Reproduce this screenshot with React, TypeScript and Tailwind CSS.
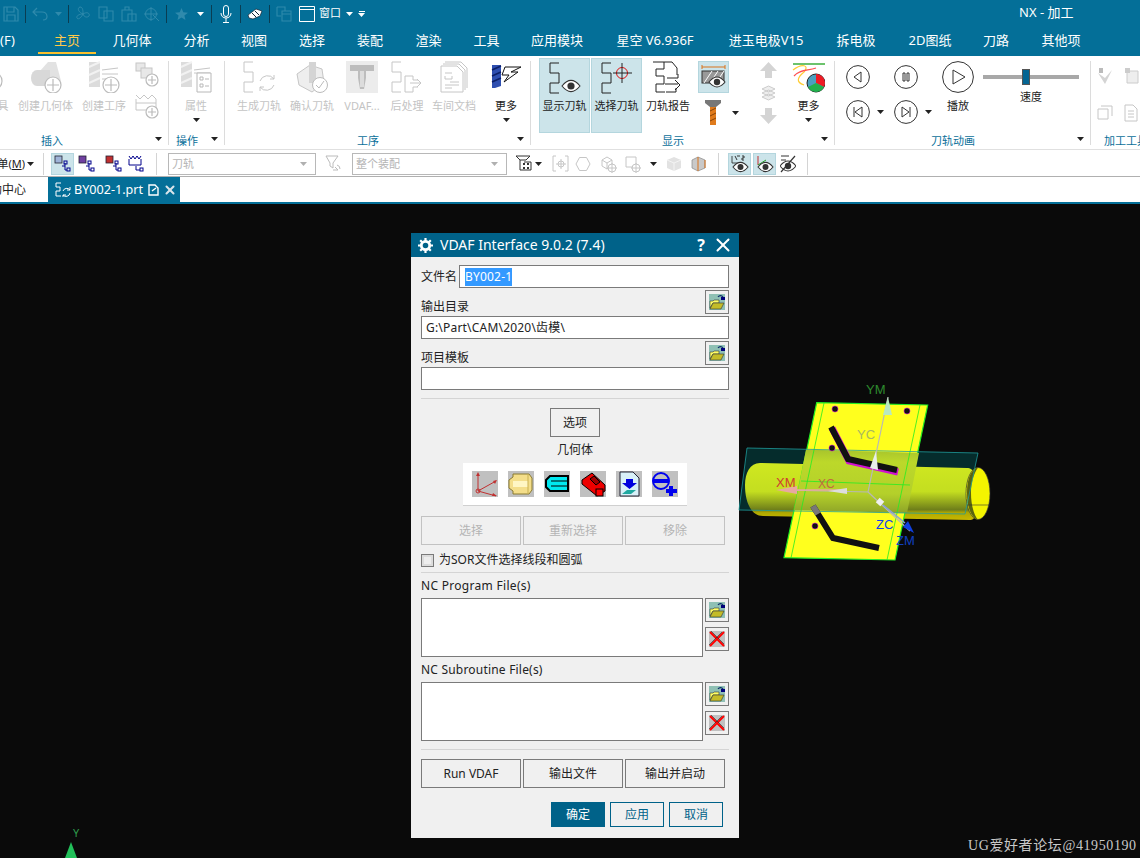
import type { ReactNode } from "react";
import { X } from "lucide-react";

const GRAY = "#c6c6c6";
const wave = "M10 1H1V11H10V21H1V31H10";

function Caret({ color = "#222" }: { color?: string }) {
  return (
    <svg width="7" height="4" viewBox="0 0 7 4" className="shrink-0">
      <path d="M0 0H7L3.5 4Z" fill={color} />
    </svg>
  );
}

function Svg({ w, h, children, className }: { w: number; h: number; children: ReactNode; className?: string }) {
  return (
    <svg width={w} height={h} viewBox={`0 0 ${w} ${h}`} fill="none" className={"shrink-0 " + (className ?? "")}>
      {children}
    </svg>
  );
}

function PlusCircle({ cx, cy, r, color = "#bbb" }: { cx: number; cy: number; r: number; color?: string }) {
  return (
    <g>
      <circle cx={cx} cy={cy} r={r} fill="#fff" stroke={color} strokeWidth="1.2" />
      <path d={`M${cx - r + 2} ${cy}H${cx + r - 2}M${cx} ${cy - r + 2}V${cy + r - 2}`} stroke={color} strokeWidth="1.2" />
    </g>
  );
}

function Eye({ x, y, w = 16, color = "#333" }: { x: number; y: number; w?: number; color?: string }) {
  const h = w * 0.62;
  return (
    <g>
      <path
        d={`M${x} ${y}Q${x + w / 2} ${y - h} ${x + w} ${y}Q${x + w / 2} ${y + h} ${x} ${y}Z`}
        fill="#fff"
        stroke={color}
        strokeWidth="1.1"
      />
      <circle cx={x + w / 2} cy={y} r={w * 0.2} fill={color} />
    </g>
  );
}

function Group({
  w,
  label,
  ml,
  children,
  noArrow,
  labelClass,
}: {
  w: number;
  label: string;
  ml?: string;
  children: ReactNode;
  noArrow?: boolean;
  labelClass?: string;
}) {
  return (
    <div className={"flex flex-col shrink-0 h-[93px] " + (ml ?? "")} style={{ width: w }}>
      <div className="flex flex-1 min-h-0">
        <div className="flex-1 min-w-0 flex">{children}</div>
      </div>
      <div className="flex h-[20px] items-center">
        <span className={"flex-1 pt-[3px] text-center text-[11px] leading-[14px] text-[#0b6f9a] whitespace-nowrap " + (labelClass ?? "")}>
          {label}
        </span>
        {!noArrow && (
          <span className="w-[19px] flex justify-center">
            <Caret />
          </span>
        )}
      </div>
    </div>
  );
}

function Divider() {
  return <div className="w-px h-[84px] mt-[5px] bg-[#dcdcdc] shrink-0" />;
}

function Item({
  w,
  ml,
  icon,
  label,
  off,
  caret,
  active,
}: {
  w: number;
  ml?: number;
  icon: ReactNode;
  label: string;
  off?: boolean;
  caret?: boolean;
  active?: boolean;
}) {
  return (
    <div
      className={
        "flex flex-col items-center shrink-0 h-[75px] whitespace-nowrap " +
        (active ? "bg-[#cce4ea] border border-[#b4d6de] mt-[2px] pt-[2px]" : "pt-[5px]")
      }
      style={{ width: w, marginLeft: ml ?? 0 }}
    >
      <div className="h-[32px] flex justify-center">{icon}</div>
      <span className={"mt-[6px] text-[11px] leading-[14px] " + (off ? "text-[#c4c4c4]" : "text-[#222]")}>{label}</span>
      {caret && (
        <span className="mt-[5px]">
          <Caret />
        </span>
      )}
    </div>
  );
}

function Circle({ d, size = 24, children }: { d?: string; size?: number; children?: ReactNode }) {
  const c = size / 2;
  return (
    <Svg w={size} h={size}>
      <circle cx={c} cy={c} r={c - 0.6} stroke="#333" strokeWidth="1" fill="#fff" />
      {d && <path d={d} stroke="#333" strokeWidth="1" />}
      {children}
    </Svg>
  );
}

function TopRow() {
  const sep = <div className="w-px h-[18px] bg-[#0a3d52] shrink-0" />;
  const dim = "#2f8aac";
  return (
    <div className="h-[27px] flex items-center relative">
      <Svg w={16} h={16} className="ml-[3px]">
        <path d="M1 1H12L15 4V15H1Z M4 1V6H11V1 M4 15V9H12V15" stroke={dim} strokeWidth="1.2" />
      </Svg>
      <div className="ml-[6px]">{sep}</div>
      <Svg w={16} h={14} className="ml-[6px]">
        <path d="M5 1L1 5L5 9M1 5H10C13 5 15 7 15 9.5C15 12 13 13 11 13" stroke={dim} strokeWidth="1.2" />
      </Svg>
      <span className="ml-[7px]">
        <Caret color={dim} />
      </span>
      <div className="ml-[6px]">{sep}</div>
      <Svg w={16} h={16} className="ml-[6px]">
        <path d="M8 8C3 6 2 2 5 1C8 1 8 5 8 8ZM8 8C13 5 15 8 14 10C12 12 9 11 8 8ZM8 8C6 12 3 14 2 12C1 10 4 8 8 8Z" stroke={dim} />
      </Svg>
      <Svg w={16} h={16} className="ml-[7px]">
        <path d="M1 1H9V12H1ZM6 5H15V15H6Z" stroke={dim} strokeWidth="1.1" />
      </Svg>
      <Svg w={16} h={16} className="ml-[7px]">
        <path d="M1 4H11V15H1ZM4 4V1H8V4M7 8H15V15H7Z" stroke={dim} strokeWidth="1.1" />
      </Svg>
      <Svg w={16} h={16} className="ml-[7px]">
        <circle cx="7" cy="8" r="5.5" stroke={dim} />
        <path d="M0 8H14M7 1V15M9 9L15 15" stroke={dim} />
      </Svg>
      <div className="ml-[6px]">{sep}</div>
      <Svg w={13} h={12} className="ml-[8px]">
        <path d="M6.5 0L8.3 4.3L13 4.7L9.4 7.6L10.5 12L6.5 9.6L2.5 12L3.6 7.6L0 4.7L4.7 4.3Z" fill="#2f8aac" />
      </Svg>
      <span className="ml-[9px]">
        <Caret color="#fff" />
      </span>
      <div className="ml-[7px]">{sep}</div>
      <Svg w={12} h={18} className="ml-[8px]">
        <rect x="3.5" y="0.5" width="5" height="11" rx="2.5" stroke="#fff" />
        <path d="M1 8C1 11 3 13 6 13C9 13 11 11 11 8M6 13V17M3 17.5H9" stroke="#fff" />
      </Svg>
      <div className="ml-[8px]">{sep}</div>
      <Svg w={16} h={12} className="ml-[6px]">
        <path d="M1 7L9 1L15 3L13 8L6 11L2 10Z" fill="#fff" stroke="#123" strokeWidth="0.7" />
        <path d="M5 5L9 9M8 3L12 7" stroke="#123" strokeWidth="1" />
      </Svg>
      <div className="ml-[6px]">{sep}</div>
      <Svg w={16} h={16} className="ml-[6px]">
        <path d="M1 1H9V5M1 1V10H5M6 5H15V15H6ZM6 8H15" stroke={dim} strokeWidth="1.1" />
      </Svg>
      <Svg w={16} h={16} className="ml-[7px]">
        <path d="M0.5 0.5H15.5V15.5H0.5ZM0.5 3.5H15.5" stroke="#fff" />
      </Svg>
      <span className="ml-[4px] text-[11px] text-white">窗口</span>
      <span className="ml-[5px]">
        <Caret color="#fff" />
      </span>
      <span className="ml-[5px] flex flex-col gap-[1px] items-center">
        <span className="w-[6px] h-px bg-white" />
        <Caret color="#fff" />
      </span>
      <span className="absolute left-[1019px] top-[4px] text-[13px] leading-[16px] text-white whitespace-nowrap">NX - 加工</span>
    </div>
  );
}

const menus: [string, number][] = [
  ["几何体", 72],
  ["分析", 57],
  ["视图", 58],
  ["选择", 58],
  ["装配", 58],
  ["渲染", 59],
  ["工具", 57],
  ["应用模块", 84],
  ["星空 V6.936F", 112],
  ["进玉电极V15", 110],
  ["拆电极", 70],
  ["2D图纸", 78],
  ["刀路", 54],
  ["其他项", 76],
];

function MenuRow() {
  return (
    <div className="h-[29px] flex text-[13px] text-white whitespace-nowrap">
      <span className="w-[38px] leading-[27px]">(F)</span>
      <span className="w-[58px] text-center leading-[27px] text-[#ffc94a] border-b-2 border-[#fbc02d] h-[27px]">主页</span>
      {menus.map(([m, w]) => (
        <span key={m} className="text-center leading-[27px]" style={{ width: w }}>
          {m}
        </span>
      ))}
    </div>
  );
}

function SmallStack() {
  return (
    <div className="flex flex-col ml-[9px] w-[24px] pt-[6px] gap-[6px] shrink-0">
      <Svg w={24} h={26}>
        <rect x="1" y="1" width="9" height="8" fill="#e8e8e8" stroke={GRAY} />
        <rect x="6" y="6" width="11" height="10" fill="#e8e8e8" stroke={GRAY} />
        <PlusCircle cx={17} cy={18} r={6} />
      </Svg>
      <Svg w={24} h={26}>
        <path d="M1 1L5 5L9 1L13 5L17 1L21 5M1 5V16H21V5M1 9H21" stroke={GRAY} />
        <PlusCircle cx={17} cy={18} r={6} />
      </Svg>
    </div>
  );
}

function Ribbon() {
  return (
    <div className="h-[93px] flex overflow-hidden border-b-0 bg-white">
      <Group w={213} label="插入" ml="ml-[-45px]">
        <Item w={63} label="创建刀具" off icon={<Svg w={32} h={32}><PlusCircle cx={22} cy={20} r={9} /></Svg>} />
        <Item
          w={55}
          label="创建几何体"
          off
          icon={
            <Svg w={32} h={32}>
              <path d="M10 10L18 1L26 1L31 20L18 26Z" fill="#e2e2e2" />
              <ellipse cx="7" cy="17" rx="6" ry="8" fill="#d8d8d8" />
              <path d="M7 9H20V25H7" fill="#d8d8d8" />
              <PlusCircle cx={23} cy={24} r={8} />
            </Svg>
          }
        />
        <Item
          w={44}
          ml={9}
          label="创建工序"
          off
          icon={
            <Svg w={32} h={32}>
              <path d="M1 1H12V26H1Z" fill="#dcdcdc" />
              <path d="M1 6L12 1M1 14L12 9M1 22L12 17" stroke="#f2f2f2" strokeWidth="2" />
              <path d="M14 13H30M14 9L30 7M14 18H26" stroke={GRAY} />
              <PlusCircle cx={23} cy={24} r={8} />
            </Svg>
          }
        />
        <SmallStack />
      </Group>
      <Divider />
      <Group w={55} label="操作">
        <Item
          w={54}
          label="属性"
          off
          caret
          icon={
            <Svg w={32} h={32}>
              <path d="M1 1H12V26H1Z" fill="#dcdcdc" />
              <path d="M1 6L12 1M1 14L12 9M1 22L12 17" stroke="#f2f2f2" strokeWidth="2" />
              <path d="M14 9L30 7M14 12H30" stroke={GRAY} />
              <path d="M17 12H31V31H17ZM20 16H23V19H20ZM20 23H23V26H20ZM25 18H29M25 25H29" stroke="#b8b8b8" fill="#fff" />
            </Svg>
          }
        />
      </Group>
      <Divider />
      <Group w={305} label="工序">
        <Item
          w={44}
          ml={12}
          label="生成刀轨"
          off
          icon={
            <Svg w={32} h={32}>
              <path d={wave} stroke={GRAY} />
              <path d="M17 20A8 8 0 0 1 31 18M31 24A8 8 0 0 1 17 26M31 14V18H27M17 30V26H21" stroke={GRAY} />
            </Svg>
          }
        />
        <Item
          w={44}
          ml={9}
          label="确认刀轨"
          off
          icon={
            <Svg w={33} h={32}>
              <path d="M1 13L14 4L26 8L28 22L16 31L3 24Z" fill="#eee" stroke={GRAY} />
              <path d="M13 1H20V22H13Z" fill="#d4d4d4" />
              <circle cx="24" cy="24" r="7.5" fill="#fff" stroke="#bbb" />
              <path d="M20 24L23 27L28 20" stroke="#bbb" />
            </Svg>
          }
        />
        <Item
          w={36}
          ml={10}
          label="VDAF..."
          off
          icon={
            <div className="w-[32px] h-[32px] bg-[#ececec] flex justify-center">
              <Svg w={26} h={30}>
                <path d="M1 4H25V10H17V17L15 28H11L9 17V10H1Z" fill="#bdbdbd" />
                <path d="M11 10H15V26H11Z" fill="#dcdcdc" />
              </Svg>
            </div>
          }
        />
        <Item
          w={34}
          ml={10}
          label="后处理"
          off
          icon={
            <Svg w={32} h={32}>
              <path d={wave} stroke={GRAY} />
              <path d="M14 15H22V19H27M14 15V31H22V26H27M19 22H29M26 18L30 22L26 26" stroke={GRAY} />
            </Svg>
          }
        />
        <Item
          w={44}
          ml={8}
          label="车间文档"
          off
          icon={
            <Svg w={28} h={32}>
              <path d="M5 1H21L27 7V27M3 3H19L25 9V29" stroke={GRAY} />
              <path d="M1 5H17L23 11V31H1Z" fill="#fff" stroke={GRAY} />
              <path d="M5 12H12M5 15V18H12V15M10 21H19M5 24H19M5 27H12" stroke={GRAY} />
            </Svg>
          }
        />
        <Item
          w={30}
          ml={15}
          label="更多"
          caret
          icon={
            <Svg w={30} h={30}>
              <path d="M1 4H10V25L4 27H1Z" fill="#2f4fb0" />
              <path d="M1 9L10 5M1 15L10 11M1 21L10 17" stroke="#0c1f66" strokeWidth="1.5" />
              <path d="M14 6H30L20 11H27L13 21L18 14H11Z" fill="#fff" stroke="#111" />
            </Svg>
          }
        />
      </Group>
      <Divider />
      <Group w={303} label="显示">
        <Item
          w={51}
          ml={8}
          active
          label="显示刀轨"
          icon={
            <Svg w={32} h={32} className="mt-[1px]">
              <path d={wave} stroke="#222" />
              <Eye x={13} y={24} w={18} />
            </Svg>
          }
        />
        <Item
          w={51}
          ml={1}
          active
          label="选择刀轨"
          icon={
            <Svg w={32} h={32} className="mt-[1px]">
              <path d={wave} stroke="#222" />
              <circle cx="21" cy="11" r="5.5" stroke="#e01010" />
              <path d="M12 11H31M21 1V21" stroke="#222" />
            </Svg>
          }
        />
        <Item
          w={46}
          ml={3}
          label="刀轨报告"
          icon={
            <Svg w={33} h={32}>
              <path d="M1 1H12V8H4V15H12V23H4V31H13" stroke="#222" />
              <path d="M12 1H20L25 7V14" stroke="#222" />
              <path d="M15 17H26V13M13 23H26M23 19L28 24L23 29M14 31H24V27" stroke="#222" />
            </Svg>
          }
        />
        <div className="flex flex-col ml-[7px] w-[44px] shrink-0 pt-[5px]">
          <div className="w-[31px] h-[32px] bg-[#cce4ea] border border-[#b4d6de] flex justify-center items-center">
            <Svg w={25} h={26}>
              <path d="M1 3H24" stroke="#d9731a" />
              <path d="M1 1V5M24 1V5" stroke="#d9731a" />
              <rect x="1" y="7" width="22" height="12" fill="#999" stroke="#333" />
              <path d="M3 19L11 7M9 19L17 7M15 19L23 7" stroke="#fff" />
              <Eye x={8} y={18} w={16} />
            </Svg>
          </div>
          <div className="flex items-center mt-[7px]">
            <Svg w={16} h={26} className="ml-[7px]">
              <path d="M0 0H16V3L11 7H5L0 3Z" fill="#777" />
              <path d="M5 7H11V25H5Z" fill="#e07b1c" />
              <path d="M5 11L11 8M5 16L11 13M5 21L11 18" stroke="#8a4508" />
            </Svg>
            <span className="ml-[11px]">
              <Caret />
            </span>
          </div>
        </div>
        <div className="flex flex-col items-center ml-[18px] w-[17px] pt-[6px] gap-[7px] shrink-0">
          <Svg w={17} h={16}>
            <path d="M8.5 0L17 9H12V16H5V9H0Z" fill="#d4d4d4" />
          </Svg>
          <Svg w={17} h={16}>
            <path d="M2 4L8.5 1L15 4L8.5 7ZM2 8L8.5 5L15 8L8.5 11ZM2 12L8.5 9L15 12L8.5 15Z" fill="#eee" stroke="#ccc" />
          </Svg>
          <Svg w={17} h={16}>
            <path d="M5 0H12V7H17L8.5 16L0 7H5Z" fill="#d4d4d4" />
          </Svg>
        </div>
        <Item
          w={33}
          ml={15}
          label="更多"
          caret
          icon={
            <Svg w={33} h={32}>
              <path d="M1 3H33" stroke="#0a9a0a" strokeWidth="1.2" />
              <path d="M1 9C10 2 18 4 12 11C6 16 3 21 12 24" stroke="#ffcc33" strokeWidth="1.2" />
              <path d="M2 15C8 8 16 10 24 7" stroke="#ff5050" strokeWidth="1.2" />
              <circle cx="24" cy="22" r="9" fill="#4ba0c0" stroke="#222" />
              <path d="M24 22V13A9 9 0 0 1 32 26Z" fill="#ee1c25" />
              <path d="M24 22L32 26A9 9 0 0 1 16 26Z" fill="#22b14c" />
            </Svg>
          }
        />
      </Group>
      <Divider />
      <Group w={255} label="刀轨动画">
        <div className="grid grid-cols-[24px_24px] grid-rows-[24px_24px] gap-x-[24px] gap-y-[11px] ml-[11px] mt-[9px] w-[72px] shrink-0">
          <Circle d="M15 7L8 12L15 17Z" />
          <Circle d="M9 8V16H11V8ZM13 8V16H15V8Z" />
          <div className="flex items-center w-[39px]">
            <Circle d="M8 7V17M16 7L9 12L16 17Z" />
            <span className="ml-[7px]">
              <Caret />
            </span>
          </div>
          <div className="flex items-center w-[39px]">
            <Circle d="M16 7V17M8 7L15 12L8 17Z" />
            <span className="ml-[7px]">
              <Caret />
            </span>
          </div>
        </div>
        <div className="ml-[24px] w-[32px] shrink-0 pt-[5px] flex flex-col items-center whitespace-nowrap">
          <Circle size={32} d="M11 9L23 16L11 23Z" />
          <span className="mt-[6px] text-[11px] leading-[14px] text-[#222]">播放</span>
        </div>
        <div className="ml-[9px] w-[96px] shrink-0 pt-[13px] flex flex-col items-center">
          <div className="w-full h-[16px] flex items-center justify-center relative">
            <div className="w-full h-[4px] bg-[#a8a8a8]" />
            <div className="absolute left-[39px] top-0 w-[8px] h-[16px] bg-[#046593] border border-[#555]" />
          </div>
          <span className="mt-[5px] text-[11px] leading-[14px] text-[#222]">速度</span>
        </div>
      </Group>
      <Divider />
      <Group w={60} label="加工工具" noArrow labelClass="text-left pl-[13px]">
        <div className="ml-[6px] pt-[11px] grid grid-cols-2 gap-x-[8px] gap-y-[12px] w-[46px] shrink-0">
          <Svg w={16} h={18}>
            <path d="M1 6L8 17L15 3L8 11Z" fill="#d4d4d4" />
            <path d="M2 1H6V6H2Z" fill="#bbb" />
          </Svg>
          <Svg w={16} h={18}>
            <path d="M3 4H14V16H3Z" fill="#eee" stroke="#ccc" />
            <path d="M1 1H6V6H1Z" fill="#ccc" />
          </Svg>
          <Svg w={16} h={18}>
            <path d="M1 5H11V15H1ZM4 2H15V12" stroke={GRAY} />
          </Svg>
          <Svg w={14} h={18}>
            <path d="M1 1H9L13 5V17H1ZM4 7H10M4 10H10M4 13H10" stroke={GRAY} />
          </Svg>
        </div>
      </Group>
    </div>
  );
}

function Select({ w, text, ml }: { w: number; text: string; ml: number }) {
  return (
    <div
      className="h-[22px] shrink-0 border border-[#b8b8b8] bg-white flex items-center justify-between px-[3px] text-[11px] text-[#b4b4b4]"
      style={{ width: w, marginLeft: ml }}
    >
      <span>{text}</span>
      <span className="mr-[5px]">
        <Caret color="#b0b0b0" />
      </span>
    </div>
  );
}

function Treebox({ color }: { color: string }) {
  return (
    <Svg w={17} h={18}>
      <rect x="1" y="1" width="7" height="7" fill={color} stroke="#223" strokeWidth="0.8" />
      <path d="M8 11H11V15H13M11 11V8" stroke="#00008b" />
      <rect x="10" y="6" width="3" height="3" stroke="#00008b" />
      <rect x="13" y="13" width="3" height="3" stroke="#00008b" />
    </Svg>
  );
}

function ToolSep({ ml }: { ml: number }) {
  return <div className="w-px h-[22px] bg-[#d4d4d4] shrink-0" style={{ marginLeft: ml }} />;
}

function Toolbar() {
  return (
    <div className="h-[28px] pt-[2px] flex items-center border-t border-[#e0e0e0] border-b border-b-[#b0b0b0] text-[11px] text-[#222] whitespace-nowrap">
      <span className="w-[25px] flex justify-end overflow-hidden">
        <span>
          单(<span className="underline">M</span>)
        </span>
      </span>
      <span className="ml-[2px]">
        <Caret />
      </span>
      <ToolSep ml={9} />
      <div className="ml-[7px] w-[23px] h-[22px] bg-[#cce4ea] border border-[#b4d6de] flex items-center justify-center">
        <Treebox color="#9fb4d8" />
      </div>
      <div className="ml-[4px]">
        <Treebox color="#7040a0" />
      </div>
      <div className="ml-[10px]">
        <Treebox color="#c03030" />
      </div>
      <div className="ml-[6px]">
        <Svg w={17} h={18}>
          <path d="M1 1L3 4L5 1L7 4L9 1L11 4L13 1M1 4V10H13V4" stroke="#00008b" />
          <path d="M8 11V15H12" stroke="#00008b" />
          <rect x="12" y="13" width="3" height="3" stroke="#00008b" />
        </Svg>
      </div>
      <ToolSep ml={11} />
      <Select w={148} text="刀轨" ml={11} />
      <Svg w={17} h={18} className="ml-[9px]">
        <path d="M1 1H13L8 8V13L5 11V8ZM10 12L13 15H8M12 10A4 4 0 0 1 15 14" stroke="#bbb" />
      </Svg>
      <Select w={155} text="整个装配" ml={10} />
      <Svg w={16} h={18} className="ml-[9px]">
        <path d="M0 1H14L10 5H4ZM4 5V15H15V7H8" stroke="#333" />
        <path d="M7 8H9V10H7ZM7 12H9V14H7ZM11 8H13V10H11ZM11 12H13V14H11Z" fill="#333" />
      </Svg>
      <span className="ml-[3px]">
        <Caret />
      </span>
      <Svg w={17} h={18} className="ml-[10px]">
        <path d="M4 1H1V16H4M13 1H16V16H13" stroke={GRAY} />
        <circle cx="9" cy="9" r="3" stroke={GRAY} />
        <path d="M4 9H14M9 4V14" stroke={GRAY} />
      </Svg>
      <Svg w={16} h={16} className="ml-[6px]">
        <path d="M4.5 1.5H11.5L15 8L11.5 14.5H4.5L1 8Z" stroke={GRAY} />
      </Svg>
      <Svg w={16} h={17} className="ml-[10px]">
        <path d="M1 4L6 1L11 4V10L6 13L1 10ZM1 4L6 7L11 4M6 7V13" stroke={GRAY} />
        <circle cx="11" cy="12" r="4" fill="#fff" stroke={GRAY} />
        <path d="M6 12H16M11 7V17" stroke={GRAY} />
      </Svg>
      <Svg w={16} h={17} className="ml-[8px]">
        <path d="M1 1H11V11H1" stroke={GRAY} />
        <path d="M1 1V11" stroke={GRAY} />
        <circle cx="11" cy="12" r="4" fill="#fff" stroke={GRAY} />
        <path d="M6 12H16M11 7V17" stroke={GRAY} />
      </Svg>
      <span className="ml-[9px]">
        <Caret />
      </span>
      <Svg w={16} h={16} className="ml-[9px]">
        <path d="M1 4L8 1L15 4V12L8 15L1 12Z" fill="#e2e2e2" />
        <path d="M1 4L8 7L15 4M8 7V15" stroke="#f4f4f4" />
      </Svg>
      <Svg w={15} h={16} className="ml-[9px]">
        <path d="M1 4L7 1L14 4V12L7 15L1 12Z" fill="#c9c9c9" stroke="#888" strokeWidth="0.7" />
        <path d="M7 1V15M14 4V12" stroke="#d9731a" />
      </Svg>
      <ToolSep ml={12} />
      <div className="ml-[9px] w-[23px] h-[22px] bg-[#cce4ea] border border-[#b4d6de] flex justify-center items-center">
        <Svg w={18} h={18}>
          <path d="M1 1V8H8" stroke="#222" strokeWidth="0.8" />
          <path d="M4 1L6 5M6 1H9M11 1H13V3H11V5H13" stroke="#222" strokeWidth="0.9" />
          <Eye x={2} y={12} w={15} />
        </Svg>
      </div>
      <div className="ml-[2px] w-[23px] h-[22px] bg-[#cce4ea] border border-[#b4d6de] flex justify-center items-center">
        <Svg w={18} h={18}>
          <path d="M2 1V10" stroke="#c03030" />
          <path d="M2 10L10 5" stroke="#22a022" />
          <Eye x={2} y={12} w={15} />
        </Svg>
      </div>
      <Svg w={16} h={18} className="ml-[4px]">
        <path d="M1 1H9M1 5H6" stroke="#333" />
        <Eye x={0} y={11} w={16} />
        <path d="M1 17L15 1" stroke="#333" strokeWidth="1.2" />
      </Svg>
      <ToolSep ml={11} />
    </div>
  );
}

function TabsRow() {
  return (
    <div className="h-[25px] flex items-end text-[13px] whitespace-nowrap">
      <span className="w-[48px] h-[24px] flex items-center justify-end pr-[22px] text-[#222] text-[12px] overflow-hidden">助中心</span>
      <div className="w-[132px] h-[25px] bg-[#046f98] text-white flex items-center pl-[7px]">
        <Svg w={16} h={16}>
          <path d="M6 1H1V5H5V9H1V14H6" stroke="#fff" />
          <path d="M8 9A4 4 0 0 1 15 8M15 11A4 4 0 0 1 8 13M15 5V8H12M8 15V13H11" stroke="#fff" />
        </Svg>
        <span className="ml-[3px] text-[12.6px] leading-[16px]">BY002-1.prt</span>
        <Svg w={11} h={12} className="ml-[5px]">
          <path d="M1 1H7L10 4V11H1Z" stroke="#fff" strokeWidth="1.4" />
          <path d="M4 7L8 4" stroke="#fff" strokeWidth="1.4" />
        </Svg>
        <X size={14} strokeWidth={3.5} className="ml-[4px] text-[#d8e4ea]" />
      </div>
    </div>
  );
}

function Folder() {
  return (
    <div className="w-[24px] h-[24px] bg-[#f0f0f0] border border-[#7a7a7a] flex items-center justify-center shrink-0">
      <Svg w={16} h={16}>
        <rect width="16" height="16" fill="#8fc0b4" />
        <path d="M9 3A3 3 0 0 1 14 3" stroke="#0a2a6a" strokeWidth="1.2" />
        <rect x="12" y="3" width="4" height="3" fill="#00007a" />
        <path d="M1 14V7H4L5 6H10V9H4L1 14Z" fill="#ffff66" stroke="#333" strokeWidth="0.6" />
        <path d="M1 15L4 9H15L12 15Z" fill="#c4bc28" stroke="#333" strokeWidth="0.6" />
      </Svg>
    </div>
  );
}

function Remove() {
  return (
    <div className="w-[24px] h-[24px] bg-[#f0f0f0] border border-[#7a7a7a] flex items-center justify-center shrink-0">
      <Svg w={16} h={16}>
        <rect width="16" height="16" fill="#c0c0c0" />
        <path d="M1 1L15 15M15 1L1 15" stroke="#ff0000" strokeWidth="2" />
        <path d="M2 0L15 13M0 14L13 1" stroke="#222" strokeWidth="0.6" />
      </Svg>
    </div>
  );
}

function Btn({ children, off, w = "w-[100px]" }: { children: ReactNode; off?: boolean; w?: string }) {
  return (
    <div
      className={
        "h-[29px] flex items-center justify-center border text-[12px] " +
        w +
        (off ? " border-[#c2c2c2] text-[#b4b4b4]" : " border-[#7a7a7a] text-[#222]")
      }
    >
      {children}
    </div>
  );
}

function DialogIcon({ children }: { children: ReactNode }) {
  return (
    <Svg w={26} h={26} className="bg-[#c0c0c0]">
      {children}
    </Svg>
  );
}

function FileList() {
  return (
    <div className="flex gap-[2px] h-[59px]">
      <div className="flex-1 bg-white border border-[#7a7a7a]" />
      <div className="flex flex-col gap-[5px]">
        <Folder />
        <Remove />
      </div>
    </div>
  );
}

function Dialog() {
  return (
    <div className="absolute left-[411px] top-[29px] w-[328px] h-[605px] bg-[#f0f0f0] text-[12px] text-[#222] whitespace-nowrap">
      <div className="h-[24px] bg-[#006289] flex items-center text-white pl-[7px]">
        <Svg w={15} h={15}>
          <circle cx="7.5" cy="7.5" r="4.2" stroke="#fff" strokeWidth="2.8" />
          <path d="M7.5 0V3M7.5 12V15M0 7.5H3M12 7.5H15M2.2 2.2L4 4M11 11L12.8 12.8M12.8 2.2L11 4M4 11L2.2 12.8" stroke="#fff" strokeWidth="2.2" />
        </Svg>
        <span className="ml-[7px] text-[14px] leading-[18px]">VDAF Interface 9.0.2 (7.4)</span>
        <span className="ml-auto text-[16px] font-bold leading-[18px]">?</span>
        <X size={22} strokeWidth={2.2} className="ml-[7px] mr-[5px]" />
      </div>
      <div className="px-[10px] flex flex-col">
        <div className="flex items-center mt-[8px] h-[23px]">
          <span className="w-[38px] shrink-0">文件名</span>
          <div className="flex-1 h-[23px] bg-white border border-[#7a7a7a] flex items-center pl-[5px]">
            <span className="bg-[#3399ff] text-white h-[18px] leading-[18px] tracking-[0.2px]">BY002-1</span>
          </div>
        </div>
        <div className="flex items-end justify-between mt-[2px] h-[24px]">
          <span className="leading-[16px] mb-[-1px]">输出目录</span>
          <Folder />
        </div>
        <div className="mt-[2px] h-[23px] bg-white border border-[#7a7a7a] flex items-center pl-[4px] tracking-[0.2px]">G:\Part\CAM\2020\齿模\</div>
        <div className="flex items-end justify-between mt-[2px] h-[24px]">
          <span className="leading-[16px] mb-[-1px]">项目模板</span>
          <Folder />
        </div>
        <div className="mt-[2px] h-[23px] bg-white border border-[#7a7a7a]" />
        <div className="mt-[8px] h-px bg-[#d4d4d4]" />
        <div className="mt-[9px] flex justify-center">
          <Btn w="w-[50px]">选项</Btn>
        </div>
        <div className="mt-[5px] text-center leading-[16px]">几何体</div>
        <div className="mt-[5px] mx-[42px] h-[43px] bg-white border-b border-[#d0d0d0] flex items-center justify-center gap-[10px]">
          <DialogIcon>
            <path d="M6 20V3M6 20L24 10M6 20L24 25" stroke="#c03030" />
            <circle cx="6" cy="20" r="2" stroke="#c03030" />
            <path d="M6 1L4 5H8ZM25 9L21 10L23 13ZM25 25L21 22L20 25Z" fill="#c03030" />
          </DialogIcon>
          <DialogIcon>
            <path d="M1 9L5 6V3H21L24 7V19L21 23H5V20L1 17Z" fill="#f4de8a" stroke="#8a7a30" />
            <path d="M5 10H20V16H5Z" fill="#fff6c4" />
            <path d="M20 3V23" stroke="#c8b050" />
          </DialogIcon>
          <DialogIcon>
            <path d="M2 9L6 5H24V20H6L2 16Z" fill="#00e8f0" stroke="#000" strokeWidth="2" />
            <path d="M7 10H23M7 15H23" stroke="#000" />
          </DialogIcon>
          <DialogIcon>
            <path d="M2 9L12 2L25 14V20L17 25L2 13Z" fill="#ee0000" stroke="#000" />
            <path d="M10 8L14 5L20 11L16 14Z" fill="#a00000" stroke="#000" />
            <rect x="16" y="18" width="7" height="7" fill="#ff0000" stroke="#000" />
          </DialogIcon>
          <DialogIcon>
            <path d="M4 1H17L23 7V25H4Z" fill="#d8f0f8" stroke="#223" />
            <path d="M10 8H17V12H21L13.5 18L6 12H10Z" fill="#0000dd" />
            <path d="M6 23L11 19H20L15 23Z" fill="#20a8a0" />
          </DialogIcon>
          <DialogIcon>
            <ellipse cx="9" cy="10" rx="8" ry="8" stroke="#0000ee" strokeWidth="2" />
            <path d="M1 10H17" stroke="#0000ee" strokeWidth="4" />
            <path d="M19 15V25M14 20H25" stroke="#0000ee" strokeWidth="4" />
          </DialogIcon>
        </div>
        <div className="mt-[10px] flex gap-[2px]">
          <Btn off>选择</Btn>
          <Btn off>重新选择</Btn>
          <Btn off>移除</Btn>
        </div>
        <div className="mt-[8px] flex items-center h-[14px]">
          <span className="w-[13px] h-[13px] border border-[#7a7a7a] bg-[#ededed] shadow-[inset_0_0_0_2px_#dcdcdc]" />
          <span className="ml-[5px]">为SOR文件选择线段和圆弧</span>
        </div>
        <div className="mt-[5px] h-px bg-[#d4d4d4]" />
        <div className="mt-[5px] h-[16px] leading-[16px] tracking-[0.3px]">NC Program File(s)</div>
        <div className="mt-[4px]">
          <FileList />
        </div>
        <div className="mt-[5px] h-[16px] leading-[16px] tracking-[0.2px]">NC Subroutine File(s)</div>
        <div className="mt-[4px]">
          <FileList />
        </div>
        <div className="mt-[8px] h-px bg-[#d4d4d4]" />
        <div className="mt-[9px] flex gap-[2px]">
          <Btn>Run VDAF</Btn>
          <Btn>输出文件</Btn>
          <Btn>输出并启动</Btn>
        </div>
        <div className="mt-[14px] flex justify-end gap-[5px] pr-[6px]">
          <div className="w-[54px] h-[25px] bg-[#006289] text-white flex items-center justify-center">确定</div>
          <div className="w-[54px] h-[25px] border border-[#006289] text-[#006289] flex items-center justify-center">应用</div>
          <div className="w-[54px] h-[25px] border border-[#006289] text-[#006289] flex items-center justify-center">取消</div>
        </div>
      </div>
    </div>
  );
}

function Model() {
  return (
    <svg
      width="265"
      height="195"
      viewBox="0 0 265 195"
      className="absolute left-[735px] top-[171px]"
      fontFamily="'Liberation Sans', sans-serif"
      fontSize="13"
    >
      <defs>
        <linearGradient id="cyl" x1="0" y1="0" x2="0" y2="1">
          <stop offset="0" stopColor="#cfe820" />
          <stop offset="0.5" stopColor="#c4de20" />
          <stop offset="0.82" stopColor="#6e7e1a" />
          <stop offset="0.87" stopColor="#b0a800" />
          <stop offset="1" stopColor="#c8b800" />
        </linearGradient>
        <linearGradient id="band" x1="0" y1="0" x2="0" y2="1">
          <stop offset="0" stopColor="#a8c42c" />
          <stop offset="0.2" stopColor="#bcd82a" />
          <stop offset="0.7" stopColor="#b4d02a" />
          <stop offset="1" stopColor="#8ea428" />
        </linearGradient>
      </defs>
      <path d="M12 73L243 78L230 139L4 135Z" fill="#052c2c" />
      <path d="M10 110C10 98 15 88 25 88L232 93C238 93 245 100 245 118C245 135 240 146 235 145L28 141C15 141 10 125 10 110Z" fill="url(#cyl)" />
      <ellipse cx="243" cy="118.500" rx="12" ry="26" fill="#f4f400" stroke="#333" strokeWidth="0.7" />
      <path d="M232 118C232 102 237 94 243 92.500C238 100 236 108 236 118C236 130 239 140 243 145C237 143 232 134 232 118Z" fill="#5a6410" />
      <path d="M232 130H255" stroke="#333" strokeWidth="0.6" />
      <path d="M81.700 27.700L192.700 30L160 185L49 182.700Z" fill="#ffff1e" stroke="#22ee22" strokeWidth="1.2" />
      <path d="M71 74.500L184 78L172 138L59 135Z" fill="url(#band)" />
      <path d="M89 28L56 183M185 30L152 185M66 106L175 110" stroke="#22ee22" strokeWidth="0.8" />
      <path d="M12 73L243 78L230 139L4 135Z" stroke="#1f9c9c" strokeWidth="0.8" fill="none" />
      <circle cx="100" cy="34" r="3" fill="#111" stroke="#d010d0" strokeWidth="0.6" />
      <circle cx="172" cy="36" r="3" fill="#111" stroke="#d010d0" strokeWidth="0.6" />
      <circle cx="97" cy="73" r="3" fill="#111" stroke="#d010d0" strokeWidth="0.6" />
      <circle cx="80" cy="151" r="3" fill="#111" stroke="#d010d0" strokeWidth="0.6" />
      <path d="M97 53L114 86L163 97" stroke="#d010d0" strokeWidth="7" fill="none" />
      <path d="M96 52L113 84L162 95" stroke="#111" strokeWidth="6" fill="none" />
      <path d="M78 131L98 163L144 173" stroke="#111" strokeWidth="6" fill="none" />
      <path d="M78 131L83 139" stroke="#777" strokeWidth="6" />
      <path d="M133 117L153 22M133 117L46 115M133 117L175 156" stroke="#b8b8b8" strokeWidth="1.2" />
      <path d="M153 22L148 40H157Z" fill="#b8e8c0" />
      <path d="M141 76L135 93L143 95Z" fill="#e8f0e8" />
      <path d="M41 115L62 111V119Z" fill="#e8a8a0" />
      <path d="M62 115H110" stroke="#e8a8a0" strokeWidth="1.5" />
      <path d="M93 116L112 113V119Z" fill="#ddd" />
      <rect x="142" y="124" width="6" height="6" fill="#f0f0f0" transform="rotate(40 145 127)" />
      <path d="M148 130L170 148" stroke="#8aa0d8" strokeWidth="1.5" />
      <path d="M179 158L168 152L173 146Z" fill="#1040e0" />
      <text x="131" y="19" fill="#2e8a2e">YM</text>
      <text x="122" y="64" fill="#a8b860">YC</text>
      <text x="41" y="112" fill="#d03a30">XM</text>
      <text x="83" y="113" fill="#c06a40" fontSize="12">XC</text>
      <text x="141" y="154" fill="#1040f0">ZC</text>
      <text x="161" y="170" fill="#1040c0">ZM</text>
    </svg>
  );
}

export default function App() {
  return (
    <div className="w-[1140px] h-[858px] overflow-hidden flex flex-col bg-white font-['Noto_Sans','Noto_Sans_CJK_SC',sans-serif]">
      <div className="bg-[#046f98]">
        <TopRow />
        <MenuRow />
      </div>
      <Ribbon />
      <Toolbar />
      <TabsRow />
      <div className="relative flex-1 bg-[#0a0a0a] border-t-2 border-[#046f98]">
        <Dialog />
        <Model />
        <span className="absolute left-[73px] top-[622px] text-[11px] leading-[14px] text-[#2e9a4a]">Y</span>
        <svg width="12" height="18" viewBox="0 0 12 18" className="absolute left-[65px] top-[638px]">
          <path d="M6 0L12 16H0Z" fill="#22c05a" />
        </svg>
        <span className="absolute left-[968px] top-[633px] text-[14px] leading-[18px] tracking-[0.6px] text-[#c8c8c8] whitespace-nowrap font-['Liberation_Serif','Noto_Sans_CJK_SC',serif]">
          UG爱好者论坛@41950190
        </span>
      </div>
    </div>
  );
}
